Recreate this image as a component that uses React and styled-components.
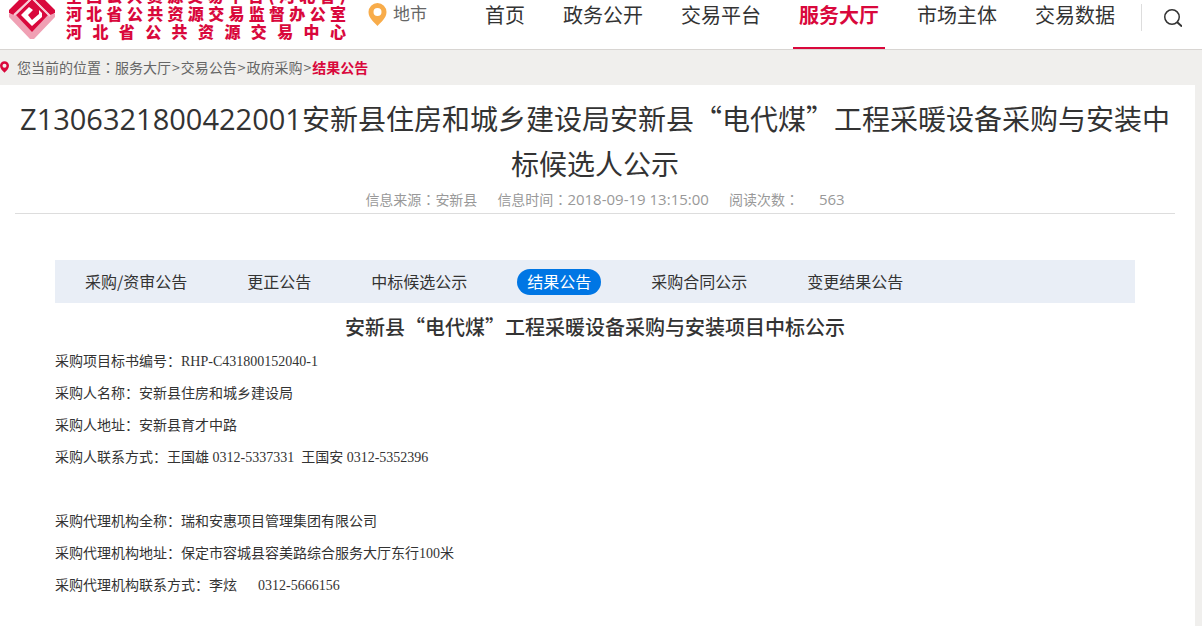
import React from 'react';
import styled, { createGlobalStyle } from 'styled-components';

const GlobalStyle = createGlobalStyle`
  body {
    margin: 0;
    background-color: #f0efed;
    color: #333;
    font-family: 'Noto Sans CJK SC', sans-serif;
  }

  a {
    color: inherit;
    text-decoration: none;
  }
`;

const Header = styled.header`
  display: flex;
  height: 49px;
  overflow: hidden;
  background-color: #fff;
  border-bottom: 1px solid #d8d5d2;
`;

const Logo = styled.a`
  flex: 0 0 auto;
  display: flex;
  align-items: flex-end;
  height: 40px;
  margin-left: 8px;
  color: #d9083c;
`;

const LogoMark = styled.svg`
  width: 48px;
  height: 60px;
  margin-right: 10px;
`;

const LogoText = styled.span`
  display: flex;
  flex-direction: column;
  width: 280px;
`;

const LogoLine = styled.span`
  font-size: 16px;
  font-weight: 900;
  line-height: 18px;
  white-space: nowrap;
  text-align: justify;
  text-align-last: justify;
`;

const City = styled.a`
  flex: 0 0 auto;
  display: flex;
  align-items: flex-start;
  margin-left: 22px;
  color: #666;
  font-size: 17px;
  line-height: 26px;
`;

const Pin = styled.svg`
  width: ${props => props.$width}px;
  height: ${props => props.$height}px;
  fill: ${props => props.color};
`;

const CityPin = styled(Pin)`
  margin: 3px 6px 0 0;
`;

const Nav = styled.nav`
  flex: 0 0 auto;
  display: flex;
  gap: 26px;
  margin-left: auto;
`;

const NavLink = styled.a`
  box-sizing: border-box;
  height: 49px;
  padding: 0 6px;
  font-size: 20px;
  line-height: 30px;
  color: ${props => (props.$active ? '#d9083c' : '#333')};
  font-weight: ${props => (props.$active ? 'bold' : 'normal')};
  border-bottom: 2px solid ${props => (props.$active ? '#d9083c' : 'transparent')};
`;

const SearchButton = styled.button`
  flex: 0 0 auto;
  height: 27px;
  margin: 4px 20px 0 20px;
  padding: 0 0 0 22px;
  background: none;
  border: 0;
  border-left: 1px solid #ddd;
  cursor: pointer;

  svg {
    display: block;
  }
`;

const Breadcrumb = styled.nav`
  box-sizing: border-box;
  display: flex;
  align-items: center;
  height: 35px;
  padding-bottom: 2px;
  color: #666;
  font-size: 14px;
  line-height: 20px;

  strong {
    color: #d9083c;
  }
`;

const BreadcrumbPin = styled(Pin)`
  margin-right: 8px;
`;

const Separator = styled.span`
  margin: 0 1px;
`;

// The traditional face centres the full-width colon in its cell
const Colon = styled.span`
  font-family: 'Noto Sans CJK TC', sans-serif;
`;

const Latin = styled.span`
  font-family: 'Open Sans', sans-serif;
`;

const Panel = styled.main`
  box-sizing: border-box;
  min-height: calc(100vh - 85px);
  margin-right: 7px;
  padding: 11px 20px 24px 15px;
  background-color: #fff;
`;

const Title = styled.h1`
  margin: 0;
  font-size: 28px;
  font-weight: normal;
  line-height: 44px;
  text-align: center;

  ${Latin} {
    font-size: 29px;
  }
`;

const Info = styled.div`
  display: flex;
  justify-content: center;
  gap: 20px;
  padding: 1px 0 1px 20px;
  border-bottom: 1px solid #ddd;
  color: #999;
  font-size: 14px;
  line-height: 26px;

  ${Latin} {
    font-size: 15px;
  }
`;

const Article = styled.article`
  padding: 46px 40px 0;
`;

const Tabs = styled.nav`
  display: flex;
  align-items: center;
  gap: 40px;
  height: 43px;
  padding: 0 20px;
  background-color: #e9eef6;
`;

const Tab = styled.a`
  padding: 0 10px 2px;
  border-radius: 13px;
  font-size: 16px;
  line-height: 24px;
  color: ${props => (props.$active ? '#fff' : '#333')};
  background-color: ${props => (props.$active ? '#0076e4' : 'transparent')};
`;

const Subtitle = styled.h2`
  margin: 8px 0 3px;
  font-size: 20px;
  font-weight: 500;
  line-height: 32px;
  text-align: center;
`;

const Line = styled.p`
  min-height: 32px;
  margin: 0;
  font-family: 'Liberation Serif', 'Noto Sans CJK SC', serif;
  font-size: 14px;
  line-height: 32px;
  white-space: pre-wrap;
`;

const navItems = ['首页', '政务公开', '交易平台', '服务大厅', '市场主体', '交易数据'];

const tabs = [
  '采购/资审公告',
  '更正公告',
  '中标候选公示',
  '结果公告',
  '采购合同公示',
  '变更结果公告',
];

const lines = [
  '采购项目标书编号：RHP-C431800152040-1',
  '采购人名称：安新县住房和城乡建设局',
  '采购人地址：安新县育才中路',
  '采购人联系方式：王国雄 0312-5337331  王国安 0312-5352396',
  '',
  '采购代理机构全称：瑞和安惠项目管理集团有限公司',
  '采购代理机构地址：保定市容城县容美路综合服务大厅东行100米',
  '采购代理机构联系方式：李炫      0312-5666156',
];

const pinPath =
  'M9 0a9 9 0 0 0-9 9c0 6 5.500 10 9 14 3.500-4 9-8 9-14a9 9 0 0 0-9-9zm0 5a4 4 0 1 1 0 8 4 4 0 0 1 0-8z';

const App = () => (
  <>
    <GlobalStyle />
    <Header>
      <Logo href="#">
        <LogoMark viewBox="0 0 48 60" aria-hidden="true">
          <path d="M1 34l5-2 18 18 18-18 5 2v3L26 59h-4L1 37z" fill="#f0a0b4" />
          <path d="M1 30L24 7l23 23v3l-5 2-18-18L6 35l-5-2z" fill="#d9083c" />
          <path d="M8 35l16-16 16 16-16 17z" fill="#d9083c" />
          <path d="M13 35l8-8 4 3-5 5 4 5 7-6v-4l3 3v4L24 46z" fill="#fff" />
          <path d="M6 35l18-17 18 18" fill="none" stroke="#f7cbd5" strokeWidth="2" />
        </LogoMark>
        <LogoText>
          <LogoLine>全国公共资源交易平台(河北省)</LogoLine>
          <LogoLine>河北省公共资源交易监督办公室</LogoLine>
          <LogoLine>河北省公共资源交易中心</LogoLine>
        </LogoText>
      </Logo>
      <City href="#">
        <CityPin viewBox="0 0 18 23" $width={19} $height={23} color="#f8ac4a" aria-hidden="true">
          <path d={pinPath} />
        </CityPin>
        地市
      </City>
      <Nav>
        {navItems.map(item => (
          <NavLink key={item} href="#" $active={item === '服务大厅'}>
            {item}
          </NavLink>
        ))}
      </Nav>
      <SearchButton type="button" aria-label="搜索">
        <svg width="18" height="18" viewBox="0 0 18 18" fill="none" stroke="#333">
          <circle cx="8" cy="8" r="7.250" strokeWidth="1.500" />
          <path d="M13 13l5 4.500" strokeWidth="2" />
        </svg>
      </SearchButton>
    </Header>
    <Breadcrumb>
      <BreadcrumbPin viewBox="0 0 18 23" $width={9} $height={12} color="#d9083c" aria-hidden="true">
        <path d={pinPath} />
      </BreadcrumbPin>
      <span>您当前的位置</span>
      <Colon>：</Colon>
      <a href="#">服务大厅</a>
      <Separator>&gt;</Separator>
      <a href="#">交易公告</a>
      <Separator>&gt;</Separator>
      <a href="#">政府采购</a>
      <Separator>&gt;</Separator>
      <strong>结果公告</strong>
    </Breadcrumb>
    <Panel>
      <Title>
        <Latin>Z1306321800422001</Latin>
        安新县住房和城乡建设局安新县“电代煤”工程采暖设备采购与安装中标候选人公示
      </Title>
      <Info>
        <span>
          信息来源<Colon>：</Colon>安新县
        </span>
        <span>
          信息时间<Colon>：</Colon>
          <Latin>2018-09-19 13:15:00</Latin>
        </span>
        <span>
          阅读次数<Colon>：</Colon>
        </span>
        <Latin>563</Latin>
      </Info>
      <Article>
        <Tabs>
          {tabs.map(tab => (
            <Tab key={tab} href="#" $active={tab === '结果公告'}>
              {tab}
            </Tab>
          ))}
        </Tabs>
        <Subtitle>安新县“电代煤”工程采暖设备采购与安装项目中标公示</Subtitle>
        {lines.map((line, index) => (
          <Line key={index}>{line}</Line>
        ))}
      </Article>
    </Panel>
  </>
);

export default App;
